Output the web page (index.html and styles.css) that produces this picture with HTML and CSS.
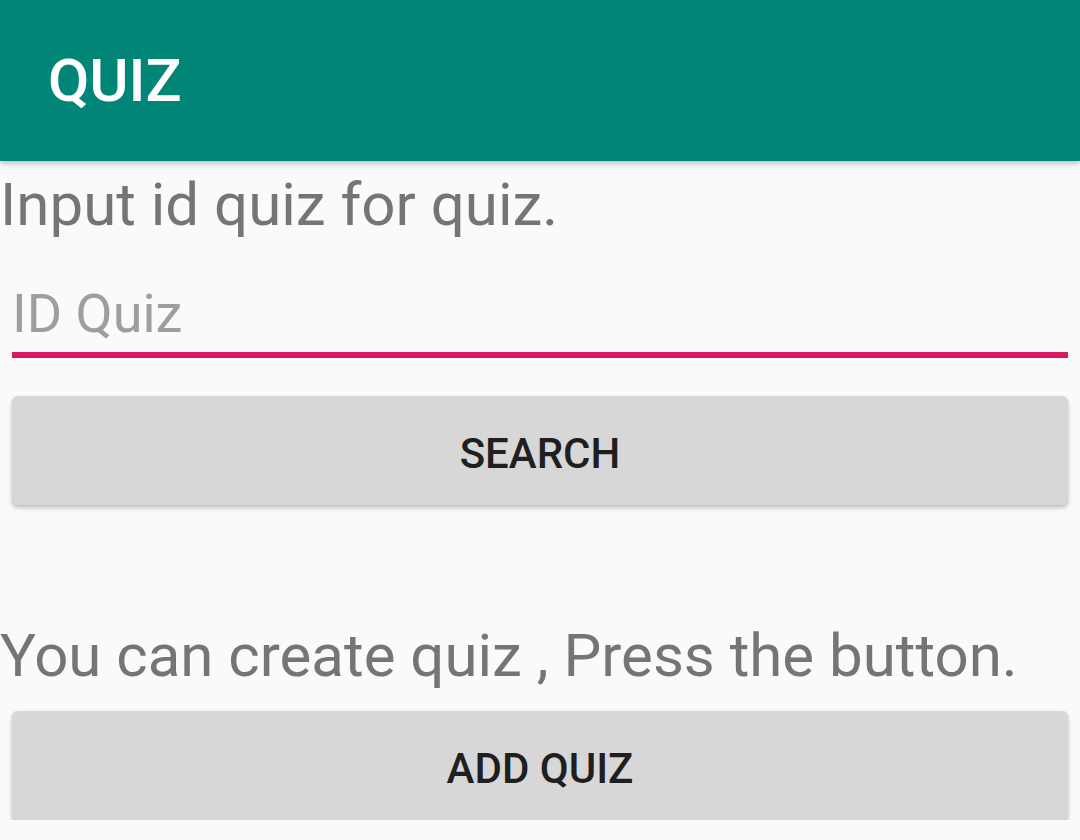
FILE: index.html
```html
<!DOCTYPE html>
<html lang="en">
<head>
<meta charset="utf-8">
<title>QUIZ</title>
<link rel="stylesheet" href="styles.css">
</head>
<body>
<header class="appbar">
  <h1 class="appbar-title">QUIZ</h1>
</header>
<main class="content">
  <p class="label label-first">Input id quiz for quiz.</p>
  <input class="edit" type="text" placeholder="ID Quiz">
  <button class="btn btn-search" type="button">SEARCH</button>
  <p class="label label-second">You can create quiz , Press the button.</p>
  <button class="btn btn-add" type="button">ADD QUIZ</button>
</main>
</body>
</html>
```

FILE: styles.css
```css
html, body {
  margin: 0;
  padding: 0;
  background: #FAFAFA;
  font-family: Roboto, "Noto Sans", sans-serif;
}

.appbar {
  position: relative;
  z-index: 1;
  height: 161px;
  background: #008577;
  display: flex;
  align-items: center;
  padding-left: 48px;
  box-sizing: border-box;
  box-shadow: 0 2px 6px rgba(0, 0, 0, 0.28);
}

.appbar-title {
  margin: 0;
  color: #FFFFFF;
  font-size: 60px;
  font-weight: 500;
  line-height: 70px;
}

.content {
  display: flex;
  flex-direction: column;
}

.label {
  margin: 0;
  font-size: 60px;
  line-height: 70px;
  color: #757575;
  font-weight: 400;
  white-space: nowrap;
}

.label-first {
  margin-top: 9px;
}

.label-second {
  margin-top: 116px;
}

.edit {
  margin: 40px 12px 0;
  height: 66px;
  padding: 0 0 6px 0;
  border: none;
  border-bottom: 6px solid #D81B60;
  background: transparent;
  font-family: Roboto, "Noto Sans", sans-serif;
  font-size: 54px;
  color: #212121;
  outline: none;
}

.edit::placeholder {
  color: #9E9E9E;
}

.btn {
  margin: 0 12px;
  height: 109px;
  border: none;
  border-radius: 6px;
  background: #D7D7D7;
  box-shadow: 0 3px 4px rgba(0, 0, 0, 0.22), 0 0 2px rgba(0, 0, 0, 0.10);
  font-family: Roboto, "Noto Sans", sans-serif;
  font-size: 42px;
  font-weight: 500;
  color: #1F1F1F;
  letter-spacing: 0;
  padding: 5px 0 0;
}

.btn-search {
  margin-top: 38px;
}

.btn-add {
  margin-top: 20px;
}
```
